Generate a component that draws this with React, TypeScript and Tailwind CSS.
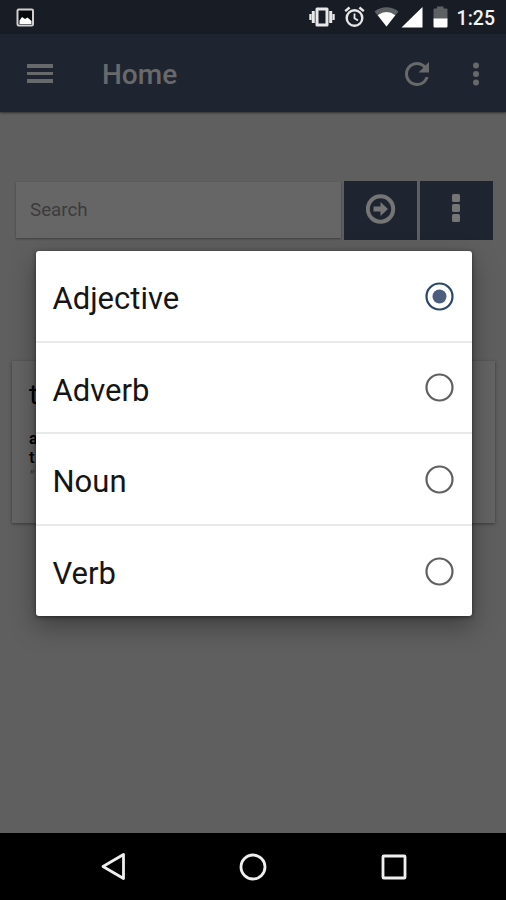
const options = ["Adjective", "Adverb", "Noun", "Verb"];

function StatusBar() {
  return (
    <div className="flex h-[34px] shrink-0 items-center bg-[#181d25] pr-[11px] pl-4">
      <svg width="19" height="19" viewBox="0 0 19 19" className="mr-auto">
        <rect x="1.5" y="1.5" width="15.5" height="16" rx="1.2" fill="#07090c" stroke="#d0d0d0" strokeWidth="2" />
        <path d="M3.5 12.5L6 9L9 11L11.5 9.5L15.5 13V16H3.5Z" fill="#fff" />
      </svg>
      <svg width="26" height="22" viewBox="0 0 26 22" className="mr-[9px]" fill="#e8e8e8">
        <path
          fillRule="evenodd"
          d="M8 1.5H18a1.5 1.5 0 0 1 1.5 1.5V19a1.5 1.5 0 0 1-1.5 1.5H8A1.5 1.5 0 0 1 6.5 19V3A1.5 1.5 0 0 1 8 1.5ZM9.5 4.5V17.5H16.5V4.5Z"
        />
        <path d="M2.8 5H5.8V17H2.8ZM0.3 8H2.5V14H0.3ZM20.2 5H23.2V17H20.2ZM23.5 8H25.7V14H23.5Z" />
      </svg>
      <svg width="21" height="22" viewBox="0 0 21 22" className="mr-[9px]" fill="none" stroke="#e8e8e8">
        <circle cx="10.5" cy="12" r="7.8" strokeWidth="2.4" />
        <path d="M10.5 7.5V12.3L14 14.5" strokeWidth="1.8" />
        <path d="M1.2 5.2L5.6 1.5M19.8 5.2L15.4 1.5" strokeWidth="2.4" />
      </svg>
      <svg width="25" height="20" viewBox="0 0 25 20" className="mr-[2px]">
        <path d="M0.5 4.5Q12.5 -3.8 24.5 4.5L12.5 19.5Z" fill="#5e6164" />
        <path d="M3.7 8.3Q12.5 1.8 21.3 8.3L12.5 19.5Z" fill="#fff" />
      </svg>
      <svg width="22" height="21" viewBox="0 0 22 21" className="mr-[10px]">
        <path d="M0.5 20.5L21.5 0V20.5Z" fill="#fff" />
      </svg>
      <svg width="15" height="22" viewBox="0 0 15 22" className="mr-[9px]">
        <path d="M0.5 3.5Q0.5 2.5 1.5 2.5H4V0.5H10.5V2.5H13.5Q14.5 2.5 14.5 3.5V13H0.5Z" fill="#5e6164" />
        <path d="M0.5 12.5H14.5V20Q14.5 21.5 13.5 21.5H1.5Q0.5 21.5 0.5 20Z" fill="#fff" />
      </svg>
      <span className="pt-[3px] text-[19.5px] leading-none font-medium text-[#f2f2f2]">1:25</span>
    </div>
  );
}

function Toolbar() {
  return (
    <div className="flex h-[78px] shrink-0 items-center bg-[#1f2530] pr-[27px] pl-[27px] shadow-[0_1px_2px_rgba(0,0,0,0.5)]">
      <div className="mt-px flex w-[26px] flex-col gap-1">
        <div className="h-[3.5px] bg-[#68696b]" />
        <div className="h-[3.5px] bg-[#68696b]" />
        <div className="h-[3.5px] bg-[#68696b]" />
      </div>
      <h1 className="ml-[49px] pt-1 text-[28px] leading-none font-medium text-[#68696b]">Home</h1>
      <svg width="24" height="24" viewBox="4 4 16 16" className="mt-px mr-[44px] ml-auto" fill="#68696b">
        <path d="M17.65 6.35A7.958 7.958 0 0 0 12 4c-4.42 0-7.99 3.58-7.99 8s3.57 8 7.99 8c3.73 0 6.84-2.55 7.73-6h-2.08A5.99 5.99 0 0 1 12 18c-3.31 0-6-2.69-6-6s2.69-6 6-6c1.66 0 3.14.69 4.22 1.78L13 11h7V4l-2.35 2.35z" />
      </svg>
      <svg width="6" height="24" viewBox="0 0 6 24" className="mt-px" fill="#68696b">
        <circle cx="3" cy="3.4" r="3" />
        <circle cx="3" cy="12" r="3" />
        <circle cx="3" cy="20.6" r="3" />
      </svg>
    </div>
  );
}

function SearchRow() {
  return (
    <div className="mx-[13px] mt-[69px] flex h-[59px] items-start">
      <div className="mt-px ml-[3px] flex h-[56px] w-[325px] items-center bg-[#666] pl-[14px] shadow-[0_1px_2px_rgba(0,0,0,0.35)]">
        <span className="text-[18.8px] leading-none text-[#3c3c3c]">Search</span>
      </div>
      <div className="ml-[3px] flex h-full w-[73px] items-center justify-center bg-[#1f2530] pb-[3px]">
        <svg width="30" height="30" viewBox="0 0 30 30">
          <circle cx="14.5" cy="15" r="12.7" fill="none" stroke="#757575" strokeWidth="4" />
          <path d="M7.5 12.5H14.5V8L22 15L14.5 22V17.5H7.5Z" fill="#757575" />
        </svg>
      </div>
      <div className="ml-[3px] flex h-full w-[73px] items-center justify-center bg-[#1f2530] pr-px pb-[3px]">
        <svg width="8" height="28" viewBox="0 0 8 28" className="mb-[2px]" fill="#757575">
          <rect y="0" width="8" height="8" rx="1.5" />
          <rect y="10" width="8" height="8" rx="1.5" />
          <rect y="20" width="8" height="8" rx="1.5" />
        </svg>
      </div>
    </div>
  );
}

function WordCard() {
  return (
    <div className="mt-[121px] mr-[11px] ml-3 h-[162px] overflow-hidden bg-[#646464] pt-[18px] pl-[17px] text-black shadow-[0_1px_3px_rgba(0,0,0,0.4)]">
      <div className="text-[28px] leading-8">t</div>
      <div className="mt-[18px] text-[16px] leading-[19px] font-bold">a</div>
      <div className="text-[17px] leading-[19px] font-medium">t</div>
      <div className="text-[15px] leading-[19px] text-[#333] italic">"</div>
    </div>
  );
}

function OptionsDialog() {
  return (
    <div className="absolute top-[251px] left-[35.5px] w-[436px] rounded-[3px] bg-white shadow-[0_10px_26px_rgba(0,0,0,0.35),0_1px_4px_rgba(0,0,0,0.5)]">
      {options.map((option, index) => (
        <div
          key={option}
          className="flex h-[91.5px] items-center justify-between border-b-2 border-[#e9e9e9] pr-[18px] pl-[17px] last:h-[90.5px] last:border-b-0"
        >
          <span className="pt-[6px] text-[31px] leading-none text-[#151515]">{option}</span>
          <svg width="29" height="29" viewBox="0 0 29 29" className="mt-px">
            <circle
              cx="14.5"
              cy="14.5"
              r="13"
              fill="none"
              stroke={index === 0 ? "#2b4668" : "#606060"}
              strokeWidth="2.2"
            />
            {index === 0 && <circle cx="14.5" cy="14.5" r="7" fill="#4c5d7f" />}
          </svg>
        </div>
      ))}
    </div>
  );
}

function NavBar() {
  return (
    <div className="mt-auto flex h-[67px] shrink-0 items-center bg-black pl-[101px]">
      <svg width="25" height="29" viewBox="0 0 25 29" fill="none" stroke="#efefef" strokeWidth="2.8">
        <path d="M22.5 2.5V26.5L2 14.5Z" strokeLinejoin="round" />
      </svg>
      <svg width="28" height="28" viewBox="0 0 28 28" className="ml-[113px]" fill="none" stroke="#efefef" strokeWidth="2.8">
        <circle cx="14" cy="14" r="12" />
      </svg>
      <svg width="26" height="26" viewBox="0 0 26 26" className="ml-[114px]" fill="none" stroke="#efefef" strokeWidth="2.8">
        <rect x="2" y="2" width="22" height="22" rx="0.8" />
      </svg>
    </div>
  );
}

export default function App() {
  return (
    <div className="relative flex h-[900px] w-[506px] flex-col overflow-hidden bg-[#5f5f5f] font-[Roboto,sans-serif]">
      <StatusBar />
      <Toolbar />
      <SearchRow />
      <WordCard />
      <NavBar />
      <OptionsDialog />
    </div>
  );
}
